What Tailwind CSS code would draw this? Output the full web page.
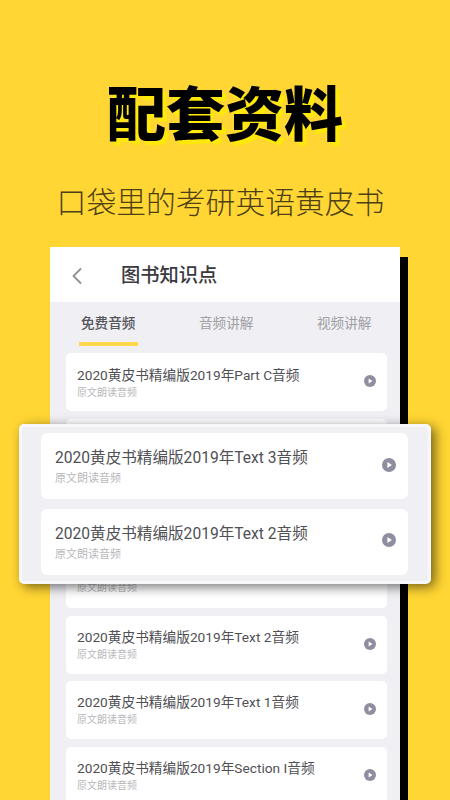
<!DOCTYPE html>
<html lang="zh">
<head>
    <meta charset="UTF-8">
    <title>配套资料</title>
    <script src="https://cdn.jsdelivr.net/npm/@tailwindcss/browser@4"></script>
</head>
<body class="bg-[#ffd633]">
<div class="relative w-[450px] h-[800px] overflow-hidden bg-[#ffd633] font-['Roboto','Noto_Sans_CJK_SC',sans-serif]">

    <!-- Heading -->
    <h1 class="pt-[77px] h-[160px] text-center text-[59px] leading-[78px] font-black text-black [text-shadow:4px_4px_0_#ffe90a]">配套资料</h1>
    <p class="mt-[8px] h-[79px] pr-[9px] text-center text-[29.8px] leading-[70px] font-light text-[#4f3f14]">口袋里的考研英语黄皮书</p>

    <!-- Phone card -->
    <div class="ml-[50px] w-[350px] h-[553px] bg-[#efeff4] shadow-[8px_10px_0_#000]">
        <div class="h-[55px] pt-[3px] bg-white flex items-center pl-[22px]">
            <svg class="w-[12px] h-[18px]" viewBox="0 0 12 18" fill="none" stroke="#8e8e93" stroke-width="1.8"><path d="M9 1.500 1.500 9 9 16.500"/></svg>
            <span class="ml-[37px] text-[19.300px] font-medium text-[#3a3a3e]">图书知识点</span>
        </div>
        <div class="relative h-[51px] text-[13.600px] leading-[42px]">
            <span class="absolute left-[31px] font-medium text-[#55555a]">免费音频</span>
            <span class="absolute left-[149px] text-[#a0a0a4]">音频讲解</span>
            <span class="absolute left-[267px] text-[#a0a0a4]">视频讲解</span>
            <div class="absolute left-[29px] top-[40px] w-[59px] h-[3.500px] bg-[#ffd84d]"></div>
        </div>
        <div class="ml-[16px] mr-[13px] flex flex-col gap-[7.670px]">
            <div class="h-[58px] shrink-0 bg-white rounded-[5px] flex items-center justify-between pl-[11px] pr-[11px]">
                <div class="pt-[2px]"><p class="text-[13.700px] leading-[18px] text-[#505055]">2020黄皮书精编版2019年Part C音频</p><p class="mt-[2px] text-[10px] leading-[14px] text-[#b8b8bc]">原文朗读音频</p></div>
                <svg class="w-[12px] h-[12px] mb-[2px]" viewBox="0 0 13 13"><circle cx="6.500" cy="6.500" r="6.500" fill="#8e8ea0"/><path d="M5 3.800v5.400l4.200-2.700z" fill="#fff"/></svg>
            </div>
            <div class="h-[58px] shrink-0 bg-white rounded-[5px]"></div>
            <div class="h-[58px] shrink-0 bg-white rounded-[5px]"></div>
            <div class="h-[58px] shrink-0 bg-white rounded-[5px] pl-[11px]">
                <p class="pt-[31px] text-[10px] leading-[14px] text-[#b8b8bc]">原文朗读音频</p>
            </div>
            <div class="h-[58px] shrink-0 bg-white rounded-[5px] flex items-center justify-between pl-[11px] pr-[11px]">
                <div><p class="text-[13.700px] leading-[18px] text-[#505055]">2020黄皮书精编版2019年Text 2音频</p><p class="mt-[2px] text-[10px] leading-[14px] text-[#b8b8bc]">原文朗读音频</p></div>
                <svg class="w-[12px] h-[12px] mb-[2px]" viewBox="0 0 13 13"><circle cx="6.500" cy="6.500" r="6.500" fill="#8e8ea0"/><path d="M5 3.800v5.400l4.200-2.700z" fill="#fff"/></svg>
            </div>
            <div class="h-[58px] shrink-0 bg-white rounded-[5px] flex items-center justify-between pl-[11px] pr-[11px]">
                <div><p class="text-[13.700px] leading-[18px] text-[#505055]">2020黄皮书精编版2019年Text 1音频</p><p class="mt-[2px] text-[10px] leading-[14px] text-[#b8b8bc]">原文朗读音频</p></div>
                <svg class="w-[12px] h-[12px] mb-[2px]" viewBox="0 0 13 13"><circle cx="6.500" cy="6.500" r="6.500" fill="#8e8ea0"/><path d="M5 3.800v5.400l4.200-2.700z" fill="#fff"/></svg>
            </div>
            <div class="h-[58px] shrink-0 bg-white rounded-[5px] flex items-center justify-between pl-[11px] pr-[11px]">
                <div><p class="text-[13.700px] leading-[18px] text-[#505055]">2020黄皮书精编版2019年Section I音频</p><p class="mt-[2px] text-[10px] leading-[14px] text-[#b8b8bc]">原文朗读音频</p></div>
                <svg class="w-[12px] h-[12px] mb-[2px]" viewBox="0 0 13 13"><circle cx="6.500" cy="6.500" r="6.500" fill="#8e8ea0"/><path d="M5 3.800v5.400l4.200-2.700z" fill="#fff"/></svg>
            </div>
        </div>
    </div>

    <!-- Enlarged rows lying over the card -->
    <div class="absolute left-[19px] top-[424px] w-[412px] h-[160px] rounded-[5px] bg-[#efeff4] border-[3px] border-[#f8f8fa] shadow-[4px_3px_12px_rgba(0,0,0,0.55)] pt-[6px] pl-[19px] pr-[20px] flex flex-col gap-[10px]">
        <div class="h-[66px] shrink-0 bg-white rounded-[6px] flex items-center justify-between pl-[14px] pr-[12px]">
            <div class="pt-[2px]"><p class="text-[15.600px] leading-[21px] text-[#505055]">2020黄皮书精编版2019年Text 3音频</p><p class="mt-[2px] text-[11px] leading-[16px] text-[#b8b8bc]">原文朗读音频</p></div>
            <svg class="w-[14px] h-[14px] mb-[2px]" viewBox="0 0 13 13"><circle cx="6.500" cy="6.500" r="6.500" fill="#8e8ea0"/><path d="M5 3.800v5.400l4.200-2.700z" fill="#fff"/></svg>
        </div>
        <div class="h-[66px] shrink-0 bg-white rounded-[6px] flex items-center justify-between pl-[14px] pr-[12px]">
            <div class="pt-[2px]"><p class="text-[15.600px] leading-[21px] text-[#505055]">2020黄皮书精编版2019年Text 2音频</p><p class="mt-[2px] text-[11px] leading-[16px] text-[#b8b8bc]">原文朗读音频</p></div>
            <svg class="w-[14px] h-[14px] mb-[4px]" viewBox="0 0 13 13"><circle cx="6.500" cy="6.500" r="6.500" fill="#8e8ea0"/><path d="M5 3.800v5.400l4.200-2.700z" fill="#fff"/></svg>
        </div>
    </div>
</div>
</body>
</html>
